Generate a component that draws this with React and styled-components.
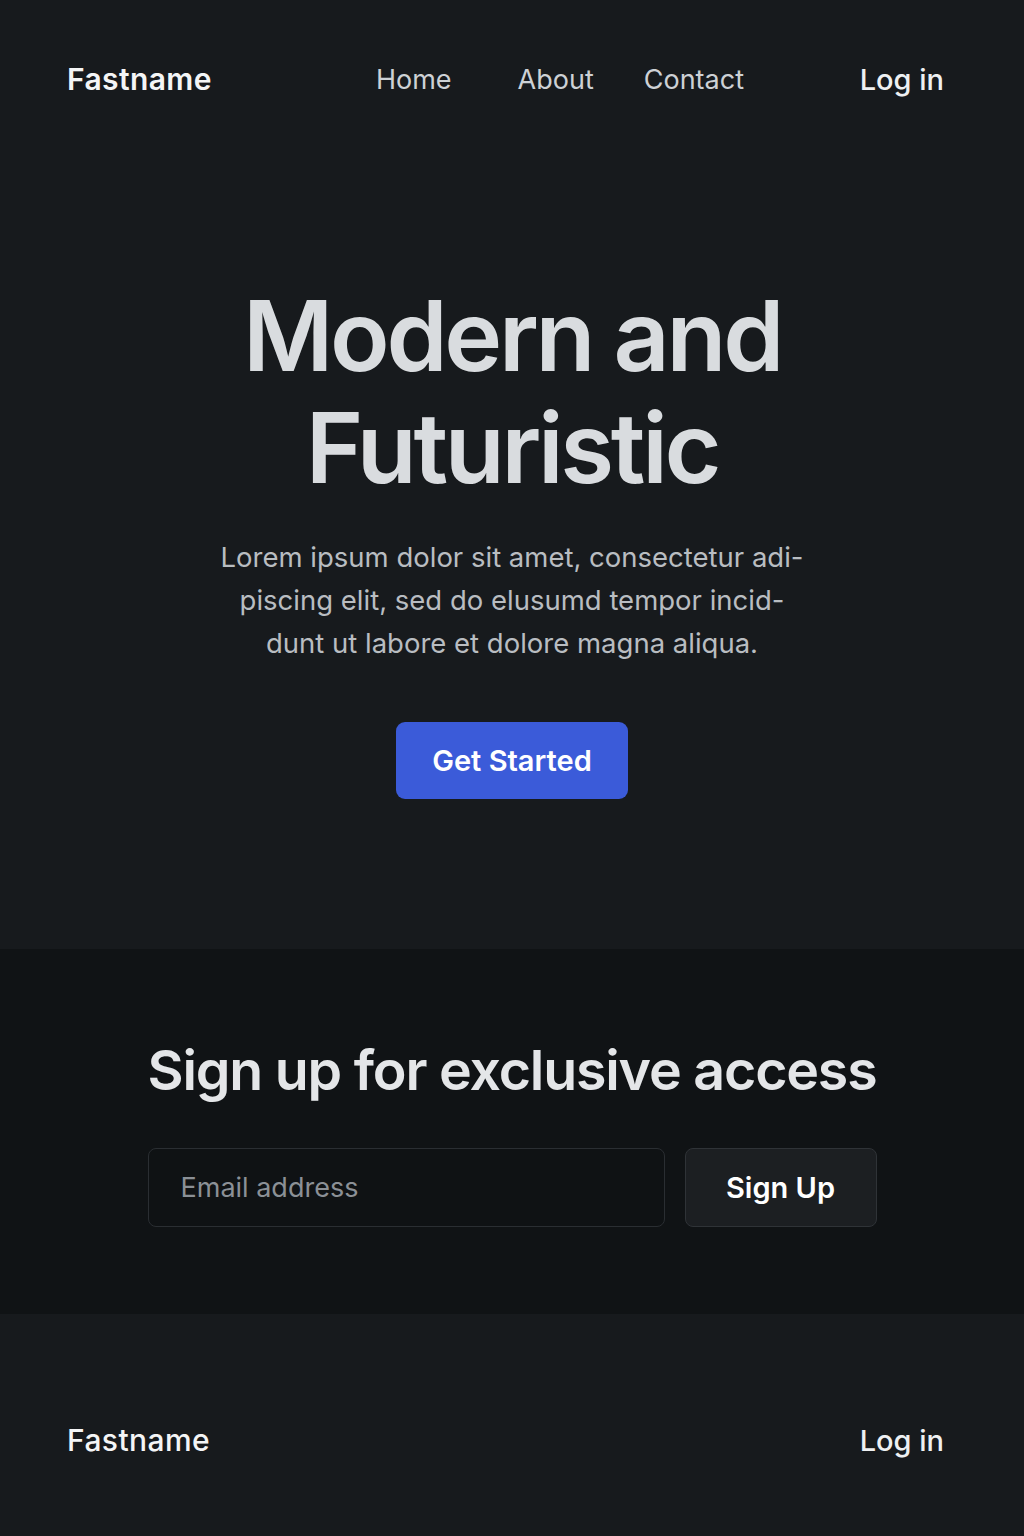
import React from "react";
import styled, { createGlobalStyle } from "styled-components";

const Global = createGlobalStyle`
  html, body { margin: 0; padding: 0; background: #171a1d; }
  body { font-family: Inter, "Noto Sans", sans-serif; -webkit-font-smoothing: antialiased; }
  * { box-sizing: border-box; }
`;

const Page = styled.div`
  width: 1024px;
  min-height: 1536px;
  background: #171a1d;
  display: flex;
  flex-direction: column;
`;

const Header = styled.header`
  display: flex;
  align-items: center;
  height: 158px;
  padding: 0 80px 0 67px;
`;

const Brand = styled.div`
  font-size: ${(p) => p.$size || 30}px;
  font-weight: ${(p) => p.$weight || 600};
  color: #f4f5f6;
  letter-spacing: 0.4px;
`;

const Nav = styled.nav`
  display: flex;
  gap: 66px;
  margin-left: 164px;
  & > a:nth-child(3) { margin-left: -16px; }
`;

const NavLink = styled.a`
  font-size: 27px;
  color: #cdd1d5;
  text-decoration: none;
`;

const Login = styled.a`
  margin-left: auto;
  font-size: 29px;
  font-weight: 500;
  color: #eef0f2;
  text-decoration: none;
`;

const Hero = styled.section`
  display: flex;
  flex-direction: column;
  align-items: center;
  padding: 122px 0 0;
  height: 791px;
`;

const Title = styled.h1`
  margin: 0;
  font-size: 98px;
  line-height: 112px;
  font-weight: 600;
  letter-spacing: -3.3px;
  color: #d9dcdf;
  text-align: center;
`;

const Lead = styled.p`
  margin: 32px 0 0;
  font-size: 27.5px;
  line-height: 43px;
  font-weight: 400;
  color: #b9bdc1;
  text-align: center;
  letter-spacing: 0;
`;

const Primary = styled.button`
  margin-top: 57px;
  width: 232px;
  height: 77px;
  border: none;
  border-radius: 9px;
  background: #3b5bd9;
  color: #ffffff;
  font-family: inherit;
  font-size: 29px;
  font-weight: 600;
  letter-spacing: 0;
`;

const SignupSection = styled.section`
  background: #101315;
  height: 365px;
  display: flex;
  flex-direction: column;
  align-items: center;
  padding-top: 86px;
`;

const SignupTitle = styled.h2`
  margin: 0;
  font-size: 55.5px;
  line-height: 70px;
  font-weight: 600;
  letter-spacing: -1.2px;
  color: #e4e6e8;
`;

const Form = styled.form`
  display: flex;
  gap: 20px;
  margin-top: 43px;
`;

const Email = styled.input`
  width: 517px;
  height: 79px;
  padding: 0 32px;
  background: #0f1214;
  border: 1.5px solid #2a2e32;
  border-radius: 8px;
  font-family: inherit;
  font-size: 27px;
  color: #e4e6e8;
  outline: none;
  &::placeholder { color: #8b9096; }
`;

const Secondary = styled.button`
  width: 192px;
  height: 79px;
  background: #1c1f22;
  border: 1.5px solid #2f3337;
  border-radius: 8px;
  color: #ffffff;
  font-family: inherit;
  font-size: 29px;
  font-weight: 600;
`;

const Footer = styled.footer`
  display: flex;
  align-items: center;
  justify-content: space-between;
  padding: 0 80px 0 67px;
  height: 252px;
`;

export default function App() {
  return (
    <Page>
      <Global />
      <Header>
        <Brand>Fastname</Brand>
        <Nav>
          <NavLink href="#">Home</NavLink>
          <NavLink href="#">About</NavLink>
          <NavLink href="#">Contact</NavLink>
        </Nav>
        <Login href="#">Log in</Login>
      </Header>
      <Hero>
        <Title>
          Modern and
          <br />
          Futuristic
        </Title>
        <Lead>
          Lorem ipsum dolor sit amet, consectetur adi-
          <br />
          piscing elit, sed do elusumd tempor incid-
          <br />
          dunt ut labore et dolore magna aliqua.
        </Lead>
        <Primary>Get Started</Primary>
      </Hero>
      <SignupSection>
        <SignupTitle>Sign up for exclusive access</SignupTitle>
        <Form onSubmit={(e) => e.preventDefault()}>
          <Email type="email" placeholder="Email address" />
          <Secondary type="submit">Sign Up</Secondary>
        </Form>
      </SignupSection>
      <Footer>
        <Brand $weight={500} $size={30}>Fastname</Brand>
        <Login href="#">Log in</Login>
      </Footer>
    </Page>
  );
}
